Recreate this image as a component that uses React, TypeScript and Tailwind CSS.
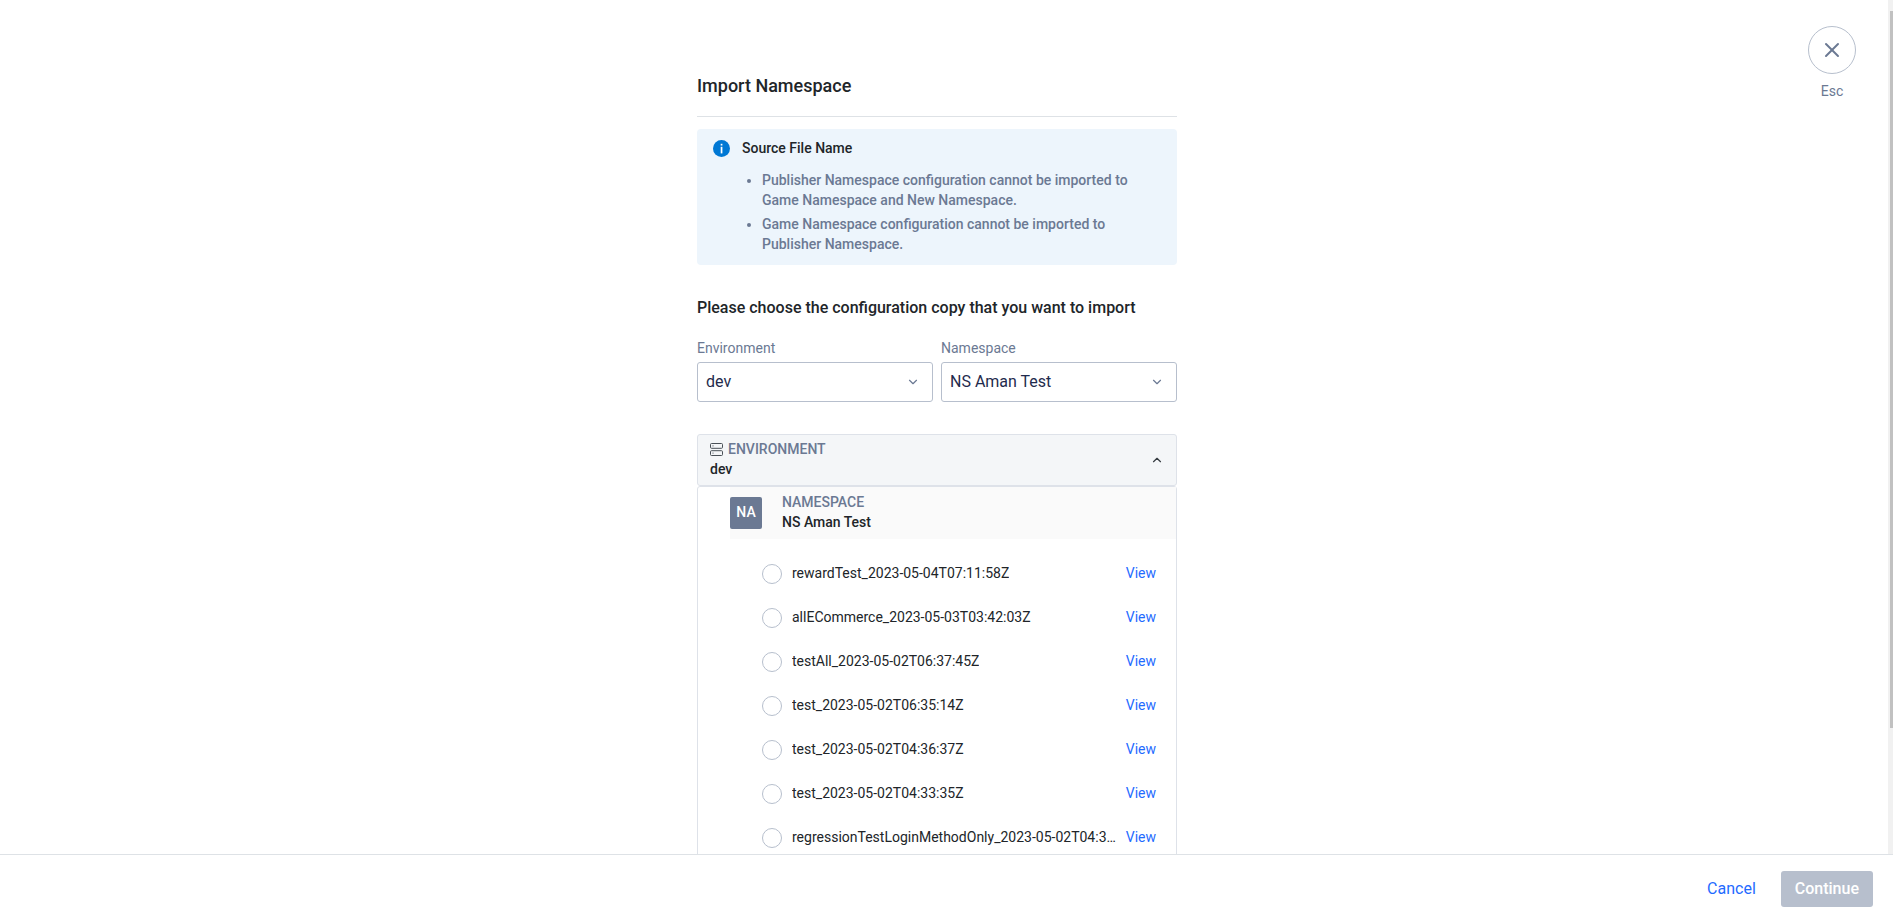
import { useState } from "react";
import { ChevronDown, ChevronUp, X } from "lucide-react";

const ENVIRONMENTS = ["dev"];
const NAMESPACES = ["NS Aman Test"];

const CONFIGS = [
  "rewardTest_2023-05-04T07:11:58Z",
  "allECommerce_2023-05-03T03:42:03Z",
  "testAll_2023-05-02T06:37:45Z",
  "test_2023-05-02T06:35:14Z",
  "test_2023-05-02T04:36:37Z",
  "test_2023-05-02T04:33:35Z",
  "regressionTestLoginMethodOnly_2023-05-02T04:3…",
];

interface SelectFieldProps {
  id: string;
  label: string;
  options: string[];
}

function SelectField({ id, label, options }: SelectFieldProps) {
  const [value, setValue] = useState(options[0]);

  return (
    <div className="flex-1">
      <label htmlFor={id} className="block text-sm leading-5 text-[#6b7993]">
        {label}
      </label>
      <div className="relative mt-1">
        <select
          id={id}
          value={value}
          onChange={(e) => setValue(e.target.value)}
          className="block h-10 w-full appearance-none rounded-[3px] border border-[#b7bfcd] bg-white px-2 text-base text-[#1f2b4d]"
        >
          {options.map((o) => (
            <option key={o}>{o}</option>
          ))}
        </select>
        <ChevronDown
          className="pointer-events-none absolute top-[13px] right-[13px] size-[14px] text-[#6b7993]"
          aria-hidden
        />
      </div>
    </div>
  );
}

function InfoIcon() {
  return (
    <svg viewBox="0 0 17 17" className="mt-[2px] size-[17px] shrink-0" aria-hidden>
      <circle cx="8.5" cy="8.5" r="8.5" fill="#0078d4" />
      <rect x="7.7" y="3.8" width="1.7" height="1.7" fill="#fff" />
      <rect x="7.7" y="6.8" width="1.7" height="6.6" fill="#fff" />
    </svg>
  );
}

function ServerIcon() {
  return (
    <svg
      viewBox="0 0 13 13"
      className="size-[13px]"
      fill="none"
      stroke="#495057"
      aria-hidden
    >
      <rect x="0.5" y="0.5" width="12" height="4.8" rx="1" />
      <rect x="0.5" y="7.7" width="12" height="4.8" rx="1" />
      <path d="M2.5 2.9h1M2.5 10.1h1" />
    </svg>
  );
}

export default function App() {
  const [open, setOpen] = useState(true);
  const [selected, setSelected] = useState("");

  return (
    <div className="flex h-screen flex-col bg-white font-['Roboto',sans-serif] text-[#212529]">
      <div className="flex min-h-0 flex-1 overflow-hidden">
        <div className="grid flex-1 grid-cols-[1fr_480px_1fr] pr-[14px]">
          <main className="col-start-2 pt-[73px]">
            <h1 className="border-b border-[#dee2e6] pb-[17px] text-lg leading-[26px] font-medium">
              Import Namespace
            </h1>

            <section className="mt-3 flex gap-3 rounded bg-[#edf5fc] px-4 pt-[9px] pb-[11px] text-sm leading-5 font-medium">
              <InfoIcon />
              <div>
                <h2>Source File Name</h2>
                <ul className="mt-3 flex list-disc flex-col gap-1 pr-8 pl-5 text-[#6b7993]">
                  <li>
                    Publisher Namespace configuration cannot be imported to Game
                    Namespace and New Namespace.
                  </li>
                  <li>
                    Game Namespace configuration cannot be imported to Publisher
                    Namespace.
                  </li>
                </ul>
              </div>
            </section>

            <h2 className="mt-[31px] text-base leading-6 font-medium">
              Please choose the configuration copy that you want to import
            </h2>

            <div className="mt-[18px] flex gap-2">
              <SelectField id="environment" label="Environment" options={ENVIRONMENTS} />
              <SelectField id="namespace" label="Namespace" options={NAMESPACES} />
            </div>

            <div className="mt-8 text-sm leading-5">
              <button
                type="button"
                aria-expanded={open}
                onClick={() => setOpen(!open)}
                className="flex h-[52px] w-full items-center justify-between rounded-[3px] border border-[#dee2e9] bg-[#f4f6f8] px-3 text-left font-medium"
              >
                <span className="flex flex-col pb-[2px]">
                  <span className="flex items-center gap-[5px] text-[#6b7993]">
                    <ServerIcon />
                    ENVIRONMENT
                  </span>
                  <span>dev</span>
                </span>
                <ChevronUp className="size-[14px] text-[#343a40]" aria-hidden />
              </button>

              {open && (
                <div className="rounded-t-[3px] border border-[#dee2e9] pb-10 pl-8">
                  <div className="flex h-[52px] items-center bg-[#fafafa] font-medium">
                    <span className="flex size-8 items-center justify-center rounded-[2px] bg-[#6b7993] pb-[2px] text-white">
                      NA
                    </span>
                    <div className="ml-5 pb-[2px]">
                      <div className="text-[#6b7993]">NAMESPACE</div>
                      <div>NS Aman Test</div>
                    </div>
                  </div>

                  <ul className="pt-[13px] pr-5 pl-8">
                    {CONFIGS.map((name) => (
                      <li key={name} className="flex h-11 items-center">
                        <label className="flex min-w-0 flex-1 items-center gap-[10px]">
                          <input
                            type="radio"
                            name="config"
                            checked={selected === name}
                            onChange={() => setSelected(name)}
                            className="size-5 shrink-0 appearance-none rounded-full border border-[#b7bfcd] bg-white checked:border-[6px] checked:border-[#1f6bff]"
                          />
                          <span className="truncate pb-[2px]">{name}</span>
                        </label>
                        <a href="#view" className="ml-2 pb-[2px] text-[#1f6bff]">
                          View
                        </a>
                      </li>
                    ))}
                  </ul>
                </div>
              )}
            </div>
          </main>

          <aside className="flex flex-col items-center justify-self-end pt-[26px] pr-[18px]">
            <button
              type="button"
              aria-label="Close"
              className="flex size-12 items-center justify-center rounded-full border border-[#b7bfcd] text-[#6b7993]"
            >
              <X className="size-6" strokeWidth={2} aria-hidden />
            </button>
            <span className="mt-[7px] text-sm leading-5 text-[#6b7993]">Esc</span>
          </aside>
        </div>

        <div className="flex w-[5px] flex-col bg-[#f1f1f1] pt-[11px] pl-[2px]" aria-hidden>
          <div className="h-[85%] bg-[#c1c1c1]" />
        </div>
      </div>

      <footer className="flex items-center justify-end gap-[25px] border-t border-[#dee2e6] pt-4 pr-5 pb-[9px]">
        <button type="button" className="text-base text-[#1f6bff]">
          Cancel
        </button>
        <button
          type="button"
          disabled
          className="h-9 rounded-[3px] bg-[#b7bfcd] px-[14px] text-base font-medium text-white"
        >
          Continue
        </button>
      </footer>
    </div>
  );
}
